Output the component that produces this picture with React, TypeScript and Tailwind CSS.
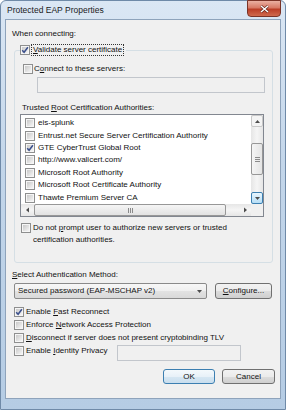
import React from "react";

// Protected EAP Properties - Vista style dialog

function CheckBox({ checked = false }: { checked?: boolean }) {
  return (
    <span className="relative flex h-[10px] w-[10px] shrink-0 items-center justify-center border border-[#8e8f8f] bg-[#f6f6f6]">
      <span className="h-[6px] w-[6px] bg-gradient-to-br from-[#c9c9c9] to-[#f5f5f5]" />
      {checked && (
        <svg className="absolute left-0 top-0" width="8" height="8" viewBox="0 0 8 8">
          <path d="M1.2 4.2 L3.1 6.3 L6.9 1.2" fill="none" stroke="#3a4f8c" strokeWidth="1.5" />
        </svg>
      )}
    </span>
  );
}

function Acc({ children }: { children: React.ReactNode }) {
  return <span className="underline underline-offset-[1px]">{children}</span>;
}

function Arrow({ dir }: { dir: "up" | "down" | "left" | "right" }) {
  const d = {
    up: "M1 4 L3.5 1 L6 4 Z",
    down: "M1 1 L3.5 4 L6 1 Z",
    left: "M4 0.5 L1 3 L4 5.5 Z",
    right: "M1 0.5 L4 3 L1 5.5 Z",
  }[dir];
  const vertical = dir === "up" || dir === "down";
  return (
    <svg width={vertical ? 7 : 5} height={vertical ? 5 : 6} viewBox={vertical ? "0 0 7 5" : "0 0 5 6"}>
      <path d={d} fill="#4d4d4d" />
    </svg>
  );
}

const certs = [
  { name: "eis-splunk", checked: false },
  { name: "Entrust.net Secure Server Certification Authority", checked: false },
  { name: "GTE CyberTrust Global Root", checked: true },
  { name: "http://www.valicert.com/", checked: false },
  { name: "Microsoft Root Authority", checked: false },
  { name: "Microsoft Root Certificate Authority", checked: false },
  { name: "Thawte Premium Server CA", checked: false },
];

const btn =
  "flex items-center justify-center rounded-[3px] border border-[#707070] bg-[linear-gradient(#f2f2f2_0%,#ebebeb_50%,#dddddd_50%,#cfcfcf_100%)]";

export default function App() {
  return (
    <div className="flex h-[410px] w-[286px] flex-col rounded-t-[6px] border border-[#6f8aa8] bg-[linear-gradient(180deg,#dbe7f4_0%,#c3d6ea_40%,#b5cce4_100%)] font-['Liberation_Sans',Arial,sans-serif] text-[8px] leading-[12px] text-[#111]">
      {/* Title bar */}
      <div className="flex h-[18px] shrink-0 items-start justify-between pl-[6px] pr-[4px]">
        <span className="mt-[3px] text-[8.5px] leading-[12px] text-[#1b1b1b]">Protected EAP Properties</span>
        <div className="-mt-[1px] flex h-[17px] w-[34px] items-center justify-center rounded-b-[4px] border border-[#7a3327] bg-[linear-gradient(#eab0a2_0%,#d77a66_45%,#bb3e27_55%,#cf6a4e_100%)]">
          <svg width="9" height="8" viewBox="0 0 9 8">
            <path d="M1 1 L8 7 M8 1 L1 7" stroke="#5a2219" strokeWidth="2.6" />
            <path d="M1 1 L8 7 M8 1 L1 7" stroke="#ffffff" strokeWidth="1.5" />
          </svg>
        </div>
      </div>

      {/* Client area */}
      <div className="mx-[4px] mb-[10px] flex flex-1 flex-col border border-[#8ea3bb] bg-[#f0f0f0]">
        <div className="ml-[6px] mt-[8px] h-[12px]">When connecting:</div>

        <fieldset className="ml-[8px] mr-[7px] mt-[4px] rounded-[3px] border border-[#d5dfe5] pb-[16px]">
          <legend className="ml-[5px] flex h-[12px] items-center gap-[1px] pr-[2px]">
            <CheckBox checked />
            <span className="border border-dotted border-[#333] px-[1px] leading-[10px]">
              <Acc>V</Acc>alidate server certificate
            </span>
          </legend>

          <div className="ml-[8px] mt-[7px] flex h-[12px] items-center gap-[1px]">
            <CheckBox />
            <span>
              C<Acc>o</Acc>nnect to these servers:
            </span>
          </div>
          <div className="ml-[22px] mr-[7px] mt-[2px] h-[16px] border border-[#c2c6cc] bg-[#f0f0f0]" />

          <div className="ml-[7px] mt-[9px] h-[12px]">
            Trusted <Acc>R</Acc>oot Certification Authorities:
          </div>

          {/* Certificate list */}
          <div className="ml-[5px] mr-[8px] flex h-[103px] flex-col border border-[#828790] bg-white">
            <div className="flex flex-1">
              <div className="flex-1 overflow-hidden pt-[2px]">
                {certs.map(c => (
                  <div key={c.name} className="flex h-[12.4px] items-center gap-[3px] whitespace-nowrap pl-[4px]">
                    <CheckBox checked={c.checked} />
                    <span>{c.name}</span>
                  </div>
                ))}
              </div>
              <div className="flex w-[12px] flex-col bg-[linear-gradient(90deg,#e6e6e6,#f5f5f5_50%,#e6e6e6)]">
                <div className="flex h-[12px] items-center justify-center rounded-[2px] border border-[#c8c8c8] bg-[#f4f4f4]">
                  <Arrow dir="up" />
                </div>
                <div className="mt-[16px] flex h-[32px] items-center justify-center rounded-[2px] border border-[#979797] bg-[linear-gradient(90deg,#f5f5f5,#e4e4e4)]">
                  <div className="flex flex-col gap-[1px]">
                    <div className="h-px w-[5px] bg-[#8a8a8a]" />
                    <div className="h-px w-[5px] bg-[#8a8a8a]" />
                    <div className="h-px w-[5px] bg-[#8a8a8a]" />
                  </div>
                </div>
                <div className="flex-1" />
                <div className="flex h-[12px] items-center justify-center rounded-[2px] border border-[#3c7fb1] bg-[linear-gradient(#e8f5fd,#b6def6)]">
                  <Arrow dir="down" />
                </div>
              </div>
            </div>
            <div className="flex h-[12px] bg-[linear-gradient(#e6e6e6,#f5f5f5_50%,#e6e6e6)]">
              <div className="flex w-[12px] items-center justify-center">
                <Arrow dir="left" />
              </div>
              <div className="ml-[1px] flex w-[192px] items-center justify-center rounded-[2px] border border-[#979797] bg-[linear-gradient(#f5f5f5,#e2e2e2)]">
                <div className="flex gap-[1px]">
                  <div className="h-[5px] w-px bg-[#8a8a8a]" />
                  <div className="h-[5px] w-px bg-[#8a8a8a]" />
                  <div className="h-[5px] w-px bg-[#8a8a8a]" />
                </div>
              </div>
              <div className="flex flex-1 items-center justify-end pr-[3px]">
                <Arrow dir="right" />
              </div>
              <div className="w-[12px] bg-[#f0f0f0]" />
            </div>
          </div>

          <div className="ml-[6px] mt-[5px] flex items-start gap-[2px]">
            <div className="mt-[1px]">
              <CheckBox />
            </div>
            <span>
              Do not <Acc>p</Acc>rompt user to authorize new servers or trusted
              <br />
              certification authorities.
            </span>
          </div>
        </fieldset>

        <div className="ml-[6px] mt-[6px] h-[12px]">
          <Acc>S</Acc>elect Authentication Method:
        </div>

        <div className="ml-[8px] mr-[6px] mt-[2px] flex h-[16px] gap-[8px]">
          <div className="flex w-[193px] items-center justify-between rounded-[2px] border border-[#8a8a8a] bg-[linear-gradient(#f7f7f7_0%,#efefef_50%,#e3e3e3_50%,#d9d9d9_100%)] pl-[3px] pr-[3px]">
            <span>Secured password (EAP-MSCHAP v2)</span>
            <Arrow dir="down" />
          </div>
          <div className={`${btn} w-[57px]`}>
            <span>
              <Acc>C</Acc>onfigure...
            </span>
          </div>
        </div>

        <div className="ml-[8px] mt-[6px] flex flex-col">
          <div className="flex h-[13px] items-center gap-[2px]">
            <CheckBox checked />
            <span>
              Enable <Acc>F</Acc>ast Reconnect
            </span>
          </div>
          <div className="flex h-[13px] items-center gap-[2px]">
            <CheckBox />
            <span>
              Enforce <Acc>N</Acc>etwork Access Protection
            </span>
          </div>
          <div className="flex h-[13px] items-center gap-[2px]">
            <CheckBox />
            <span>
              <Acc>D</Acc>isconnect if server does not present cryptobinding TLV
            </span>
          </div>
          <div className="flex items-start">
            <div className="flex h-[13px] w-[103px] items-center gap-[2px]">
              <CheckBox />
              <span>
                Enable <Acc>I</Acc>dentity Privacy
              </span>
            </div>
            <div className="mt-[1px] h-[16px] w-[124px] border border-[#c2c6cc] bg-[#f0f0f0]" />
          </div>
        </div>

        <div className="mr-[5px] mt-[8px] flex justify-end gap-[7px]">
          <div className="flex h-[15px] w-[52px] items-center justify-center rounded-[3px] border border-[#3c7fb1] bg-[linear-gradient(#f4f9fc_0%,#e8f1f8_50%,#d7e7f3_50%,#c9deee_100%)]">
            OK
          </div>
          <div className={`${btn} h-[15px] w-[53px]`}>Cancel</div>
        </div>
      </div>
    </div>
  );
}
